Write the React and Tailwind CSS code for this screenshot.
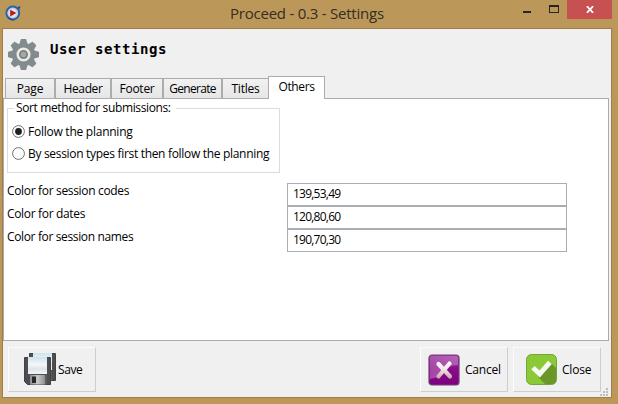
import React from 'react';

const tabs = [
  { label: 'Page', box: 'w-[50px]', text: 'tracking-[-0.1px]' },
  { label: 'Header', box: 'w-[56px]', text: 'tracking-[-0.4px]' },
  { label: 'Footer', box: 'w-[52px]', text: 'tracking-[-0.25px]' },
  { label: 'Generate', box: 'w-[59px]', text: 'tracking-[-0.7px]' },
  { label: 'Titles', box: 'w-[46px]', text: 'tracking-[-0.2px]' },
];

const colors = [
  ['Color for session codes', '139,53,49', 'tracking-[-0.33px]'],
  ['Color for dates', '120,80,60', 'tracking-[-0.33px]'],
  ['Color for session names', '190,70,30', 'tracking-[-0.36px]'],
];

function AppIcon() {
  return (
    <svg className="ml-[5px] mt-[5px] shrink-0" width="16" height="16" viewBox="0 0 16 16">
      <circle cx="7.8" cy="8" r="6.4" fill="#dfe3e8" stroke="#2865a8" strokeWidth="2" />
      <path d="M12.4 1.8l3.2-.4-1.4 3.3z" fill="#174f91" />
      <path d="M2.4 12.2A6.9 6.9 0 0 0 9 14.8" stroke="#174580" strokeWidth="1" fill="none" />
      <circle cx="7.8" cy="8" r="4.7" fill="none" stroke="#b9c2cc" strokeWidth=".8" />
      <path d="M5.2 4.7l6.2 3.4-6.2 3.5z" fill="#c11722" />
    </svg>
  );
}

function Gear() {
  return (
    <svg className="ml-[5px] mt-[10px] shrink-0" width="31" height="31" viewBox="-15.5 -15.5 31 31">
      <g fill="#818b90">
        <circle r="11.6" />
        {[0, 45, 90, 135, 180, 225, 270, 315].map((a) => (
          <path key={a} transform={`rotate(${a})`} d="M-4.2-10L-2.7-15.2Q-2.6-15.5-2.2-15.5H2.2Q2.6-15.5 2.7-15.2L4.2-10z" />
        ))}
      </g>
      <circle r="5.8" fill="#818b90" stroke="#f0ebdc" strokeWidth="2.5" />
      <circle r="3.4" fill="#a1a9ac" stroke="#788286" strokeWidth="1.2" />
    </svg>
  );
}

function Disk({ x, y }) {
  return (
    <g transform={`translate(${x} ${y})`}>
      <path d="M.5.5h26v27h-23l-3-3z" fill="#4e4e50" stroke="#424244" />
      <path d="M4 0h19v17H4z" fill="url(#disk-label)" />
      <path d="M6 18h17v9.5H6z" fill="#5e5e60" />
      <path d="M6 18h15v9.5H6z" fill="url(#shutter)" />
      <path d="M8 19.5h4v6.5H8z" fill="#28282b" />
    </g>
  );
}

function SaveIcon() {
  return (
    <svg className="shrink-0" width="33" height="33" viewBox="0 0 33 33">
      <defs>
        <linearGradient id="disk-label" x1="0" y1="0" x2="0" y2="1">
          <stop offset="0" stopColor="#cfe2ee" />
          <stop offset=".45" stopColor="#f3f7f9" />
          <stop offset=".7" stopColor="#dde4e9" />
          <stop offset="1" stopColor="#f3f6f7" />
        </linearGradient>
        <linearGradient id="shutter">
          <stop offset="0" stopColor="#8e8e8f" />
          <stop offset=".5" stopColor="#c8c8c8" />
          <stop offset="1" stopColor="#8e8e8f" />
        </linearGradient>
      </defs>
      <Disk x="5" y="0" />
      <Disk x="0" y="4" />
    </svg>
  );
}

function CancelIcon() {
  return (
    <svg className="shrink-0" width="32" height="32" viewBox="0 0 32 32">
      <defs>
        <linearGradient id="purple" x1="0" y1="0" x2="0" y2="1">
          <stop offset="0" stopColor="#9c399d" />
          <stop offset=".5" stopColor="#870b88" />
          <stop offset="1" stopColor="#7d007f" />
        </linearGradient>
        <linearGradient id="shine" x1="0" y1="0" x2="1" y2="1">
          <stop offset="0" stopColor="#d699d7" stopOpacity=".3" />
          <stop offset="1" stopColor="#d699d7" stopOpacity=".6" />
        </linearGradient>
        <linearGradient id="cross" gradientUnits="userSpaceOnUse" x1="0" y1="8" x2="0" y2="24">
          <stop offset="0" stopColor="#fff" />
          <stop offset=".5" stopColor="#f1e2e6" />
          <stop offset="1" stopColor="#c9a9a7" />
        </linearGradient>
      </defs>
      <rect x="1" y="1" width="30" height="30" rx="3" fill="url(#purple)" stroke="#754077" strokeWidth="1.2" />
      <path d="M3 2h26q1 0 1 1v8Q17 11 11 22 8 24 2 25V3q0-1 1-1z" fill="url(#shine)" />
      <path d="M10.5 10l11.5 12.5M21.5 9.5L10.5 22.5" fill="none" stroke="url(#cross)" strokeWidth="4.2" strokeLinecap="round" />
    </svg>
  );
}

function CloseIcon() {
  return (
    <svg className="shrink-0" width="31" height="31" viewBox="0 0 31 31">
      <rect x=".5" y=".5" width="30" height="30" rx="5" fill="#8bc936" stroke="#75a43c" />
      <path d="M25 9l5 5v12q0 4-4 4H19l-7-7z" fill="#6b972a" />
      <path d="M5.2 15.2l3.5-3.3 4.8 4.5L22 6.7l3.8 3.4L13.8 23.6z" fill="#f8f8f5" />
    </svg>
  );
}

function Radio({ checked, label, tracking }) {
  return (
    <label className="flex h-[22px] items-center">
      <svg className="mr-[3px] -mt-px shrink-0" width="13" height="13" viewBox="0 0 13 13">
        <circle cx="6.5" cy="6.5" r="5.9" fill="#fff" stroke="#707070" />
        {checked && <circle cx="6.5" cy="6.5" r="3.4" fill="#202020" />}
      </svg>
      <span className={tracking}>{label}</span>
    </label>
  );
}

function Button({ icon, label, className }) {
  return (
    <button className={`flex h-[45px] w-[88px] shrink-0 items-center border border-t-[#fcfcfc] border-l-[#fcfcfc] border-r-[#cecece] border-b-[#cecece] bg-[#f0f0f0] ${className}`}>
      {icon}
      <span className="pt-px">{label}</span>
    </button>
  );
}

export default function App() {
  return (
    <div className="flex h-[404px] w-[618px] flex-col overflow-hidden bg-[#bb985a] font-['Open_Sans',sans-serif] text-[12px] leading-4 whitespace-nowrap text-black">
      <header className="flex h-[28px] shrink-0">
        <AppIcon />
        <h1 className="ml-[209px] w-[180px] pt-[3px] text-[15px] leading-5 tracking-[-0.23px] text-[#342d22]">Proceed - 0.3 - Settings</h1>
        <div className="ml-auto mr-[6px] flex">
          <svg width="44" height="19" viewBox="0 0 44 19" shapeRendering="crispEdges">
            <path d="M0 11h8v2H0z" fill="#252525" />
            <path d="M26 5h10v8H26zM27 7v5h8V7z" fill="#252525" fillRule="evenodd" />
          </svg>
          <div className="flex h-[19px] w-[45px] items-center justify-center bg-[#c75050]">
            <svg width="8" height="7" viewBox="0 0 8 7">
              <path d="M.9.2l6.2 6.6M7.1.2L.9 6.8" stroke="#fff" strokeWidth="1.8" />
            </svg>
          </div>
        </div>
      </header>

      <main className="ml-[2px] flex h-[370px] w-[610px] shrink-0 flex-col border border-[#a17c4c] bg-[#f0f0f0]">
        <div className="flex h-[47px] shrink-0">
          <Gear />
          <h2 className="ml-[11px] mt-[10px] font-['DejaVu_Sans_Mono',monospace] text-[14px] leading-5 font-bold tracking-[0.57px]">User settings</h2>
        </div>
        <div className="relative z-10 -mb-px flex h-[23px] shrink-0 items-end pl-[2px]">
          {tabs.map(({ label, box, text }, i) => (
            <div key={label} className={`flex h-[21px] items-center justify-center border border-[#acacac] bg-linear-to-b from-[#f1f1f1] to-[#e6e6e6] pt-px ${i === 4 ? 'border-r-0' : ''} ${box} ${text}`}>
              {label}
            </div>
          ))}
          <div className="flex h-[23px] w-[57px] justify-center border border-b-0 border-[#acacac] bg-white pt-[2px] tracking-[-0.4px]">Others</div>
        </div>

        <section className="h-[243px] w-[606px] shrink-0 border border-[#acacac] bg-white pl-[3px]">
          <fieldset className="mt-px h-[73px] w-[273px] border border-[#dcdcdc] pl-[4px]">
            <legend className="ml-[2px] h-[16px] w-[162px] pl-[2px] leading-[16px] tracking-[-0.37px]">Sort method for submissions:</legend>
            <div className="-mt-px pt-[6px]">
              <Radio checked label="Follow the planning" tracking="tracking-[-0.25px]" />
              <Radio label="By session types first then follow the planning" tracking="tracking-[-0.31px]" />
            </div>
          </fieldset>
          <div className="mt-[10px]">
            {colors.map(([label, value, tracking]) => (
              <div key={label} className="flex h-[23px]">
                <label className={`w-[280px] ${tracking}`}>{label}</label>
                <div className="h-[23px] w-[280px] border border-[#abadb3] pt-[2px] pl-[5px] text-[12px] tracking-[-0.77px]">{value}</div>
              </div>
            ))}
          </div>
        </section>

        <footer className="flex flex-1 pt-[6px] pl-[5px]">
          <Button icon={<SaveIcon />} label="Save" className="pl-[15px] gap-[1px] tracking-[-0.4px]" />
          <Button icon={<CancelIcon />} label="Cancel" className="ml-[324px] pl-[7px] gap-[5px] tracking-[-0.2px]" />
          <Button icon={<CloseIcon />} label="Close" className="ml-[5px] pl-[12px] gap-[5px] tracking-[-0.2px]" />
          <svg className="-ml-px self-end mb-px" width="8" height="8" viewBox="0 0 8 8" fill="#bdbdbd" shapeRendering="crispEdges">
            <path d="M6 0h2v2H6zM3 3h2v2H3zM6 3h2v2H6zM0 6h2v2H0zM3 6h2v2H3zM6 6h2v2H6z" />
          </svg>
        </footer>
      </main>
    </div>
  );
}
